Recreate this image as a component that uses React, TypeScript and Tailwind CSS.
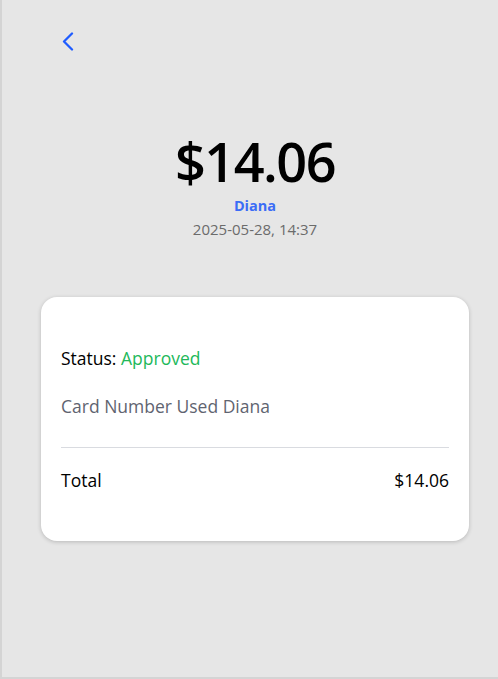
export default function App() {
  return (
    <div
      className="h-[679px] w-[498px] bg-[#e6e6e6] border-l-2 border-b-2 border-[#d4d4d4] text-black overflow-hidden"
      style={{ fontFamily: '"Open Sans", "Noto Sans", sans-serif' }}
    >
      <div className="pl-[59px] pt-[32px]">
        <button className="block text-[#1f5cff]">
          <svg width="14" height="19" viewBox="0 0 14 19" fill="none" stroke="currentColor" strokeWidth="2.3" strokeLinecap="round" strokeLinejoin="round">
            <polyline points="11,1.5 3,9.5 11,17.5" />
          </svg>
        </button>
      </div>

      <div className="pl-[39px] pr-[29px]">
        <div className="mt-[83px] flex flex-col items-center">
          <h1 className="text-[54px] leading-none font-semibold tracking-[-1.5px]">$14.06</h1>
          <div className="mt-[8px] text-[14.5px] font-bold text-[#3b6cf6] leading-5">Diana</div>
          <div className="text-[15px] text-[#6b6b6b] leading-5 mt-[3px]">2025-05-28, 14:37</div>
        </div>

        <div className="mt-[58px] bg-white rounded-2xl shadow-[0_1px_4px_rgba(0,0,0,0.2)] px-[20px] pt-[49px] pb-[49px]">
          <div className="text-[17.5px] leading-6">
            Status: <span className="text-[#22b85a]">Approved</span>
          </div>
          <div className="mt-[24px] text-[17.5px] leading-6 text-[#5f6470]">Card Number Used Diana</div>
          <div className="mt-[29px] border-t border-[#d9dbe0]" />
          <div className="mt-[20px] flex justify-between text-[17.5px] leading-6">
            <span>Total</span>
            <span>$14.06</span>
          </div>
        </div>
      </div>
    </div>
  );
}
